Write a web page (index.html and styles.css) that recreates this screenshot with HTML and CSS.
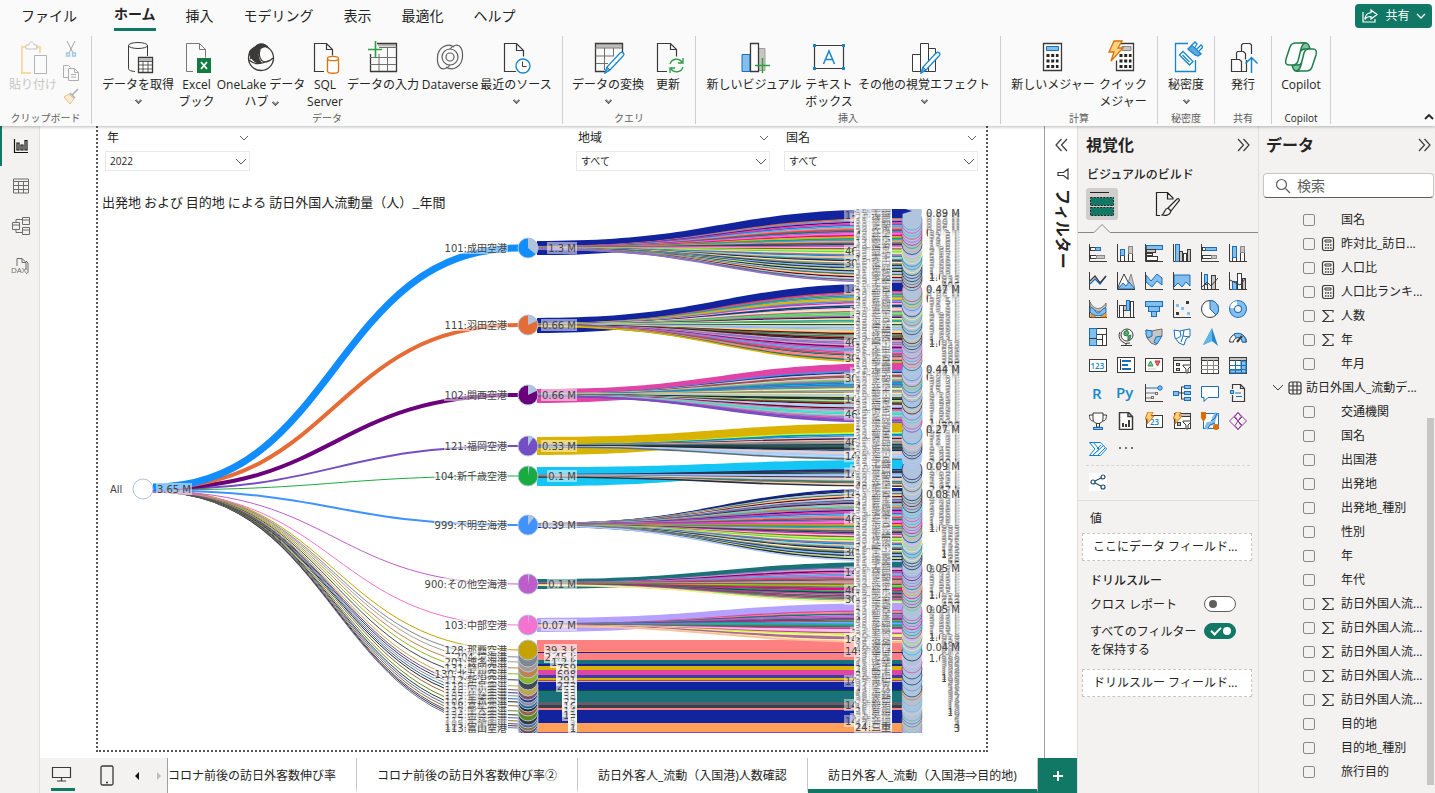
FILE: index.html
```html
<!DOCTYPE html>
<html lang="ja">
<head>
<meta charset="utf-8">
<title>訪日外客人_流動</title>
<link rel="stylesheet" href="styles.css">
</head>
<body>
<div class="app">
<header class="top">
  <div class="menu-row">
    <nav class="menu">
      <button class="menu-item file">ファイル</button>
      <button class="menu-item active">ホーム</button>
      <button class="menu-item">挿入</button>
      <button class="menu-item">モデリング</button>
      <button class="menu-item">表示</button>
      <button class="menu-item">最適化</button>
      <button class="menu-item">ヘルプ</button>
    </nav>
    <button class="share">
      <svg width="18" height="16" viewBox="0 0 18 16" fill="none" stroke="#fff" stroke-width="1.2"><path d="M2 4v10h12v-3M10 2l6 4.500-6 4.500V8.500C7 8.500 5 9.500 4 11.500 4 7.500 6.500 4.800 10 4.600z"/></svg>
      <span>共有</span>
      <svg width="10" height="8" viewBox="0 0 10 8" fill="none" stroke="#fff" stroke-width="1.300"><path d="M1 2l4 4 4-4"/></svg>
    </button>
  </div>
  <div class="ribbon">
    <section class="group g-clip">
      <div class="items">
        <button class="tool w48 off">
          <svg width="34" height="34" viewBox="0 0 34 34" fill="none"><path d="M10 7H6v26h9M20 7h4v6" stroke="#fbd9a6" stroke-width="2"/><path d="M10 9V5h3c0-4 5-4 5 0h3v4z" stroke="#c8c6c4"/><path d="M18.500 15.500h12v18h-12z" stroke="#b5b3b1" fill="#fafafa"/></svg>
          <span>貼り付け</span>
        </button>
        <div class="mini">
          <button aria-label="切り取り"><svg width="16" height="18" viewBox="0 0 16 18" fill="none"><path d="M4 1l6 12M12 1L6 13" stroke="#a6a4a2"/><path d="M3.500 13h3v3h-3zM9.500 13h3v3h-3z" stroke="#9cc9e8" stroke-width="1.300"/></svg></button>
          <button aria-label="コピー"><svg width="18" height="18" viewBox="0 0 18 18" fill="none" stroke="#b0aeac"><path d="M6 13.500H1.500v-12h5l2 2M6.500 4.500h6l4 4v8h-10zM12.500 4.500v4h4M9 10.500h5M9 13h5"/></svg></button>
          <button aria-label="書式のコピー"><svg width="18" height="18" viewBox="0 0 18 18" fill="none"><path d="M16 1l-6 6M8 5l5 5" stroke="#b0aeac" stroke-width="1.500"/><path d="M7 6L2 9l6 7 4-5z" stroke="#f1bd83" fill="#fdebd2"/></svg></button>
        </div>
      </div>
      <h2>クリップボード</h2>
    </section>
    <section class="group g-data">
      <div class="items">
        <button class="tool w80">
          <svg width="34" height="34" viewBox="0 0 34 34" fill="none" stroke="#3b3a39"><path d="M14 31.500C9 31 7.500 30 7.500 28.500v-23M26.500 5.500V16"/><ellipse cx="17" cy="5.500" rx="9.500" ry="3"/><path d="M17.500 17.500h14v15h-14z" fill="#fff" stroke-width="1.300"/><path d="M18 18h13v3H18z" fill="#bebbb8" stroke="none"/><path d="M17.500 21.500h14M17.500 25h14M17.500 29h14M22 21v11M27 21v11" stroke-width=".8"/></svg>
          <span>データを取得</span><i class="caret"></i>
        </button>
        <button class="tool w37">
          <svg width="34" height="34" viewBox="0 0 34 34" fill="none" stroke="#7a7876"><path d="M13 31.500H6.500v-28h13l6 6v8M19.500 3.500v6h6"/><path d="M17 18h14v15H17z" fill="#107c41" stroke="none"/><path d="M21 22l6 7M27 22l-6 7" stroke="#fff" stroke-width="1.800"/></svg>
          <span>Excel<br>ブック</span>
        </button>
        <button class="tool w92">
          <svg width="34" height="34" viewBox="0 0 34 34" fill="none" stroke="#3b3a39" stroke-width="1.300"><circle cx="17" cy="18" r="12.500"/><path d="M11 7c2-5 11-5 14 1-5-2-9 0-10 5-1 4 1 7 3 10-4 1-8 0-12-6-3-5 0-8 5-10z" fill="#3b3a39" stroke="none"/><path d="M16 10c-2 6 1 11 4 12 3 0 6-1 9-4M5 20c6 5 11 4 17 2M10 9c-3 4-2 8-4 10"/></svg>
          <span>OneLake データ<br>ハブ <i class="caret inline"></i></span>
        </button>
        <button class="tool w36">
          <svg width="34" height="34" viewBox="0 0 34 34" fill="none" stroke="#3b3a39"><path d="M16 31.500H6.500v-28h12l6 6v6M18.500 3.500v6h6" stroke-width="1.200"/><path d="M19.500 19v12c0 3 11 3 11 0V19" stroke="#d9730d" fill="#fff" stroke-width="1.300"/><ellipse cx="25" cy="18.500" rx="5.500" ry="2.200" fill="#fff" stroke="#d9730d" stroke-width="1.300"/></svg>
          <span>SQL<br>Server</span>
        </button>
        <button class="tool w80">
          <svg width="34" height="34" viewBox="0 0 34 34" fill="none"><path d="M12 3.500h19v3H12z" fill="#bebbb8"/><path d="M11 3.500h19.500v28h-26V14" stroke="#3b3a39" stroke-width="1.300"/><path d="M13 7.500h17.500M4 17.500h26M4 24.500h26M13 14v17M21.500 8v23" stroke="#72706e"/><path d="M2 9.500h14M9.500 1v17" stroke="#2ea043" stroke-width="1.600"/></svg>
          <span>データの入力</span>
        </button>
        <button class="tool w54">
          <svg width="34" height="34" viewBox="0 0 34 34" fill="none" stroke="#605e5c" stroke-width="1.200"><path d="M21 7C14 2 5 8 4.500 17 4 25 7 30 12 28.500c3-.8 4-2 5-3.500"/><path d="M13 27c7 5 16-1 16.500-10C30 9 27 4 22 5.500c-3 .8-4 2-5 3.500"/><circle cx="17" cy="17" r="8"/><circle cx="17" cy="17" r="4"/></svg>
          <span>Dataverse</span>
        </button>
        <button class="tool w78">
          <svg width="34" height="34" viewBox="0 0 34 34" fill="none" stroke="#3b3a39"><path d="M17 31.500H5.500v-28h12l7 7v6M17.500 3.500v7h7" stroke-width="1.200"/><circle cx="24" cy="26" r="7" stroke="#1887c9" fill="#fff" stroke-width="1.400"/><path d="M23.500 21.500v5h4"/></svg>
          <span>最近のソース</span><i class="caret"></i>
        </button>
      </div>
      <h2>データ</h2>
    </section>
    <section class="group g-query">
      <div class="items">
        <button class="tool w80">
          <svg width="34" height="34" viewBox="0 0 34 34" fill="none"><path d="M4.500 3.500h27v4h-27z" fill="#bebbb8"/><path d="M31.500 12V3.500h-27v28h10" stroke="#3b3a39" stroke-width="1.300"/><path d="M4 8h27M5 16h18M5 23.500h12M13.500 8v22M22.500 8v8" stroke="#72706e"/><path d="M14 33l2-6 13-14c3-2 5 1 3 3L19 30z" fill="#fff" stroke="#1887c9" stroke-width="1.300"/><path d="M14 33l2-6 3 3z" fill="#5aa9e0" stroke="#1887c9"/></svg>
          <span>データの変換</span><i class="caret"></i>
        </button>
        <button class="tool w36">
          <svg width="34" height="34" viewBox="0 0 34 34" fill="none" stroke="#3b3a39"><path d="M16 31.500H6.500v-28h13l6 6v7M19.500 3.500v6h6" stroke-width="1.200"/><path d="M19 24c2-6 9-6 12-2M32 18v5h-5M32 27c-2 6-9 6-12 2M19 33v-5h5" stroke="#2e9b47" stroke-width="1.300"/></svg>
          <span>更新</span>
        </button>
      </div>
      <h2>クエリ</h2>
    </section>
    <section class="group g-insert">
      <div class="items">
        <button class="tool w100">
          <svg width="34" height="34" viewBox="0 0 34 34" fill="none"><path d="M5 14.500h8v17H5z" fill="#83beec" stroke="#1a6fb8"/><path d="M21 8.500h7v22h-7z" fill="#c8c6c4" stroke="#a19f9d"/><path d="M13.500 3.500h8v28h-8z" fill="#fff" stroke="#3b3a39" stroke-width="1.300"/><path d="M18 25.500h15M25.500 18v15" stroke="#2ea043" stroke-width="1.500"/></svg>
          <span>新しいビジュアル</span>
        </button>
        <button class="tool w50">
          <svg width="34" height="34" viewBox="0 0 34 34" fill="none"><path d="M2.500 5.500h29v23h-29z" stroke="#3b3a39" stroke-width="1.200"/><path d="M1 4h3v3H1zM30 4h3v3h-3zM1 27h3v3H1zM30 27h3v3h-3z" fill="#1887c9"/><path d="M11.500 24L17 11l5.500 13M13.500 19.500h7" stroke="#1887c9" stroke-width="1.500"/></svg>
          <span>テキスト<br>ボックス</span>
        </button>
        <button class="tool w140">
          <svg width="34" height="34" viewBox="0 0 34 34" fill="none" stroke="#3b3a39"><path d="M5.500 14.500h8v17h-8zM13.500 3.500h8v28h-8zM21.500 8.500h7v23h-7z" fill="#fff"/><path d="M14 33l2-6 13-14c3-2 5 1 3 3L19 30z" fill="#fff" stroke="#1887c9" stroke-width="1.300"/><path d="M14 33l2-6 3 3z" fill="#5aa9e0" stroke="#1887c9"/></svg>
          <span>その他の視覚エフェクト</span><i class="caret"></i>
        </button>
      </div>
      <h2>挿入</h2>
    </section>
    <section class="group g-calc">
      <div class="items">
        <button class="tool w90">
          <svg width="34" height="34" viewBox="0 0 34 34" fill="none"><path d="M7.500 3.500h18v27h-18z" fill="#fff" stroke="#3b3a39" stroke-width="1.300"/><path d="M10.500 6.500h12v4h-12z" fill="#83beec" stroke="#1a6fb8"/><path d="M10.500 15.500h12M10.500 21h12M10.500 26.500h12" stroke="#252423" stroke-width="3" stroke-dasharray="3 1.700"/></svg>
          <span>新しいメジャー</span>
        </button>
        <button class="tool w50">
          <svg width="34" height="34" viewBox="0 0 34 34" fill="none"><path d="M11.500 3.500h16v27h-17v-10" fill="#fff" stroke="#3b3a39" stroke-width="1.300"/><path d="M16 6.500h9v4h-9z" fill="#c8c6c4" stroke="#8a8886"/><path d="M13.500 15.500h12M13.500 21h12M13.500 26.500h12" stroke="#252423" stroke-width="3" stroke-dasharray="3 1.700"/><path d="M8 1h8l-4 7h5L5 21l3-9H3z" fill="#fcd280" stroke="#d9730d" stroke-width="1.300"/></svg>
          <span>クイック<br>メジャー</span>
        </button>
      </div>
      <h2>計算</h2>
    </section>
    <section class="group g-one">
      <div class="items">
        <button class="tool w50">
          <svg width="34" height="34" viewBox="0 0 34 34" fill="none" stroke="#1887c9" stroke-width="1.300"><path d="M19 3.500H6.500v28h20V20"/><path d="M10.500 15l3.500-3.500L24 21.500 20.500 25zM13.500 15l7 7"/><path d="M19 9l4-4 9 9-3 2-3-1-6-5z" fill="#5aa9e0"/><path d="M23 5l3-3 2 2-2 3M28 9l4-4 2 2-4 4" fill="#fff"/></svg>
          <span>秘密度</span><i class="caret"></i>
        </button>
      </div>
      <h2>秘密度</h2>
    </section>
    <section class="group g-one">
      <div class="items">
        <button class="tool w50">
          <svg width="34" height="34" viewBox="0 0 34 34" fill="none" stroke="#3b3a39" stroke-width="1.200"><path d="M5.500 19.500h8l2 2v10h-10zM10.500 19v-6l1-1.500h6l2 2v6M15.500 11V5l1.500-1.500h7l1.500 1.500v9M15.500 31.500h5V20"/><path d="M25.500 33V18M19.500 23.500l6-6 6 6" stroke="#1887c9" stroke-width="1.500"/></svg>
          <span>発行</span>
        </button>
      </div>
      <h2>共有</h2>
    </section>
    <section class="group g-one">
      <div class="items">
        <button class="tool w50">
          <svg width="34" height="34" viewBox="0 0 34 34" fill="none" stroke="#1e7f4c" stroke-width="1.500"><path d="M17 3h5c2 0 3 2 4 6h-5c-3 0-4 1-5 3z" fill="#86c2a2"/><path d="M8 25h6c2 0 3-1 4-3l-3 9h-3c-2 0-3-2-4-6z" fill="#86c2a2"/><path d="M12 3h10c-3 0-4 2-5 6l-3 12c-1 3-2 4-5 4H5c-3 0-4-2-3-6l4-12c1-3 3-4 6-4z" fill="#fff"/><path d="M22 31H12c3 0 4-2 5-6l3-12c1-3 2-4 5-4h4c3 0 4 2 3 6l-4 12c-1 3-3 4-6 4z" fill="#fff"/></svg>
          <span>Copilot</span>
        </button>
      </div>
      <h2 class="dark">Copilot</h2>
    </section>
    <button class="collapse" aria-label="リボンを折りたたむ"><svg width="10" height="8" viewBox="0 0 10 8" fill="none" stroke="#252423" stroke-width="1.800"><path d="M1 6l4-4 4 4"/></svg></button>
  </div>
</header>

<div class="work">
  <nav class="rail">
    <button class="rail-btn on" aria-label="レポート"><svg width="16" height="16" viewBox="0 0 16 16" fill="none" stroke="#111" stroke-width="1.200"><path d="M1.500 1v13.500H15M4 5h2v7H4zM8 7h2v5H8zM12 2.500h2V12h-2z"/></svg></button>
    <button class="rail-btn" aria-label="テーブル"><svg width="18" height="16" viewBox="0 0 18 16" fill="none" stroke="#6e6c6a"><path d="M1.500 1h15v14h-15zM1.500 3.500h15M1.500 7.500h15M1.500 11.500h15M6.500 4v11M11.500 4v11"/></svg></button>
    <button class="rail-btn" aria-label="モデル"><svg width="20" height="20" viewBox="0 0 20 20" fill="none" stroke="#6e6c6a"><path d="M11.500 1.500h7v7h-7zM11.500 4h7M11.500 11.500h7v7h-7zM11.500 14h7M1.500 6.500h7v7h-7zM1.500 9h7M5 6V3.500h6M5 14v2.500h6"/></svg></button>
    <button class="rail-btn" aria-label="DAX"><svg width="20" height="18" viewBox="0 0 20 18" fill="none" stroke="#6e6c6a"><path d="M6 9V1.500h5l4 4V13M11 1.500v4h4M15 4l2 2v9c0 1-1 1.500-2 1.500"/><text x="0" y="16" font-size="8" font-family="Open Sans" fill="#6e6c6a" stroke="none">DAX</text></svg></button>
  </nav>

  <div class="center">
    <div class="upper">
      <main class="stage">
        <div class="page">
          <div class="slicers">
            <label class="slicer s-year"><span class="cap">年 <svg width="10" height="6" viewBox="0 0 10 6"><path d="M1 1l4 4 4-4"/></svg></span>
              <span class="box"><select><option>2022</option></select><svg width="12" height="7" viewBox="0 0 12 7"><path d="M1 1l5 5 5-5"/></svg></span></label>
            <label class="slicer"><span class="cap">地域 <svg width="10" height="6" viewBox="0 0 10 6"><path d="M1 1l4 4 4-4"/></svg></span>
              <span class="box"><select><option>すべて</option></select><svg width="12" height="7" viewBox="0 0 12 7"><path d="M1 1l5 5 5-5"/></svg></span></label>
            <label class="slicer"><span class="cap">国名 <svg width="10" height="6" viewBox="0 0 10 6"><path d="M1 1l4 4 4-4"/></svg></span>
              <span class="box"><select><option>すべて</option></select><svg width="12" height="7" viewBox="0 0 12 7"><path d="M1 1l5 5 5-5"/></svg></span></label>
          </div>
          <h1>出発地 および 目的地 による 訪日外国人流動量（人）_年間</h1>
          <svg id="flow" class="flow" viewBox="98 209 888 524" role="img" aria-label="訪日外国人流動量"></svg>
        </div>
      </main>
      <aside class="filters">
        <button aria-label="展開"><svg width="13" height="14" viewBox="0 0 13 14" fill="none" stroke="#3b3a39" stroke-width="1.200"><path d="M6.500 1l-5.500 6 5.500 6M12 1L6.500 7l5.500 6"/></svg></button>
        <svg class="funnel" width="12" height="12" viewBox="0 0 12 12" fill="none" stroke="#3b3a39" stroke-width="1.200"><path d="M11 1v10L6.500 7.500H1v-3h5.500z"/></svg>
        <span class="vtext">フィルター</span>
      </aside>
    </div>
    <footer class="tabs">
      <div class="views">
        <button class="v-desk" aria-label="デスクトップ"><svg width="22" height="16" viewBox="0 0 22 16" fill="none" stroke="#3b3a39" stroke-width="1.200"><path d="M1.500 1.500h18v10h-18zM10.500 12v3M6 15h9"/></svg></button>
        <button aria-label="モバイル"><svg width="14" height="22" viewBox="0 0 14 22" fill="none" stroke="#3b3a39" stroke-width="1.300"><rect x="1" y="1" width="12" height="19" rx="1.500"/><path d="M6 17.500h2"/></svg></button>
        <button aria-label="前へ"><svg width="6" height="10" viewBox="0 0 6 10"><path d="M5 1v8L1 5z" fill="#111"/></svg></button>
        <button aria-label="次へ"><svg width="6" height="10" viewBox="0 0 6 10"><path d="M1 1v8l4-4z" fill="#bbb"/></svg></button>
      </div>
      <button class="tab cut">コロナ前後の訪日外客数伸び率</button>
      <button class="tab">コロナ前後の訪日外客数伸び率②</button>
      <button class="tab">訪日外客人_流動（入国港)人数確認</button>
      <button class="tab sel">訪日外客人_流動（入国港⇒目的地)</button>
      <button class="add" aria-label="新しいページ"><svg width="12" height="12" viewBox="0 0 12 12" stroke="#fff" stroke-width="2"><path d="M6 1v10M1 6h10"/></svg></button>
    </footer>
  </div>

  <aside class="viz">
    <div class="pane-head"><h2>視覚化</h2><button aria-label="閉じる"><svg width="13" height="14" viewBox="0 0 13 14" fill="none" stroke="#3b3a39" stroke-width="1.200"><path d="M1 1l5.500 6L1 13M6.500 1L12 7l-5.500 6"/></svg></button></div>
    <h3>ビジュアルのビルド</h3>
    <div class="modes">
      <button class="mode on" aria-label="ビルド"><svg width="32" height="32" viewBox="0 0 32 32"><path d="M4 4.500h19" stroke="#252423"/><path d="M4.500 9.500h23v8h-23zM4.500 19.500h23v8h-23z" fill="#117865" stroke="#252423" stroke-dasharray="2 1.200"/></svg></button>
      <button class="mode" aria-label="書式"><svg width="32" height="32" viewBox="0 0 32 32" fill="none" stroke="#252423" stroke-width="1.200"><path d="M9 27.500H5.500v-23h11l6 6M16.500 5v6h6M17 20l9-9c2-1 3 1 2 2l-8 10M17 20l3 3c-1 4-5 5-9 4 3-2 2-6 6-7z"/></svg></button>
    </div>
    <svg class="pointer" height="12" viewBox="0 0 181 12" preserveAspectRatio="xMinYMin slice" fill="none" stroke="#8a8886"><path d="M0 10.500h16l8-8 8 8h1000"/></svg>
    <div class="icons" id="icons"></div>
    <div class="custom"><button aria-label="フロー"><svg width="18" height="18" viewBox="0 0 18 18" fill="#fff" stroke="#1f4e66" stroke-width="1.200"><path d="M4 9l10-5M4 9l10 5"/><circle cx="4" cy="9" r="2"/><circle cx="14" cy="4" r="2"/><circle cx="14" cy="14" r="2"/></svg></button></div>
    <div class="wells">
      <h4 class="plain">値</h4>
      <button class="well">ここにデータ フィールド...</button>
      <h4>ドリルスルー</h4>
      <label class="sw"><span>クロス レポート</span><input type="checkbox" role="switch"></label>
      <label class="sw two"><span>すべてのフィルターを保持する</span><input type="checkbox" role="switch" checked></label>
      <button class="well">ドリルスルー フィールド...</button>
    </div>
  </aside>

  <aside class="data">
    <div class="pane-head"><h2>データ</h2><button aria-label="閉じる"><svg width="13" height="14" viewBox="0 0 13 14" fill="none" stroke="#3b3a39" stroke-width="1.200"><path d="M1 1l5.500 6L1 13M6.500 1L12 7l-5.500 6"/></svg></button></div>
    <label class="search"><svg width="16" height="16" viewBox="0 0 16 16" fill="none" stroke="#605e5c" stroke-width="1.200"><circle cx="6.500" cy="6.500" r="5"/><path d="M10.500 10.500L15 15"/></svg><input type="search" placeholder="検索" aria-label="検索"></label>
    <div class="list"><div class="fields" id="fields"></div><div class="scroll"><div class="thumb"></div></div></div>
  </aside>
</div>
</div>
<script src="main.js"></script>
</body>
</html>
```
FILE: styles.css
```css
* { box-sizing: border-box; }
body { margin: 0; font-family: "Open Sans", "Noto Sans CJK JP", sans-serif; font-size: 12px; line-height: 18px; color: #252423; background: #fff; }
button { font: inherit; color: inherit; background: none; border: 0; padding: 0; margin: 0; }
h1, h2, h3, h4 { margin: 0; font-weight: 400; font-size: 12px; }
svg { display: block; flex: none; }
.app { height: 100vh; display: flex; flex-direction: column; overflow: hidden; }

.top { background: #fafafa; height: 126px; flex: none; box-shadow: 0 1px 3px #0004; position: relative; z-index: 2; }
.menu-row { height: 36px; display: flex; justify-content: space-between; align-items: flex-start; }
.menu { display: flex; gap: 30px; padding-left: 21px; }
.menu-item { font-size: 14px; line-height: 22px; padding-bottom: 3px; margin-top: 3px; height: 28px; white-space: nowrap; }
.menu-item.file { margin-right: 7px; }
.menu-item.active { font-weight: 700; border-bottom: 3px solid #117865; }
.share { margin: 4px 3px 0 0; width: 77px; height: 24px; border-radius: 4px; background: #117865; color: #fff; display: flex; align-items: center; justify-content: center; gap: 6px; }

.ribbon { display: flex; height: 90px; }
.group { border-right: 1px solid #d0cecc; height: 88px; display: flex; flex-direction: column; }
.group h2 { font-size: 10px; line-height: 12px; text-align: center; color: #605e5c; }
.group h2.dark { color: #252423; }
.items { display: flex; height: 77px; padding-top: 4px; }
.g-clip { width: 92px; }
.g-clip .items { padding-left: 9px; }
.g-data { width: 471px; }
.g-data .items { padding-left: 6px; }
.g-query { width: 133px; }
.g-query .items { padding-left: 5px; }
.g-query .items { gap: 2px; }
.g-insert { width: 305px; }
.g-insert .items { padding-left: 8px; }
.g-calc { width: 157px; }
.g-calc .items { padding-left: 7px; }
.g-one { width: 57px; }
.g-one .items { justify-content: center; }
.g-one:last-of-type { width: 59px; }
.tool { display: flex; flex-direction: column; align-items: center; gap: 2px; line-height: 17px; white-space: nowrap; }
.tool span { text-align: center; }
.tool.off { color: #c8c6c4; }
.w36 { width: 36px; } .w37 { width: 37px; } .w48 { width: 48px; } .w50 { width: 50px; }
.w54 { width: 54px; } .w78 { width: 78px; } .w80 { width: 80px; } .w90 { width: 90px; }
.w92 { width: 92px; } .w100 { width: 100px; } .w140 { width: 140px; }
.caret { width: 5px; height: 5px; border: solid #484644; border-width: 0 1px 1px 0; box-shadow: inset -1px -1px 0 #8a8886; rotate: 45deg; margin-top: 3px; }
.caret.inline { display: inline-block; margin: 0 0 1px 1px; }
.mini { display: flex; flex-direction: column; gap: 6px; align-items: center; width: 28px; }
.collapse { margin-left: auto; align-self: flex-end; padding: 0 1px 5px 0; }

.work { flex: 1; display: flex; min-height: 0; }
.rail { width: 40px; flex: none; background: #f3f2f1; border-right: 1px solid #e1dfdd; display: flex; flex-direction: column; }
.rail-btn { height: 40px; display: flex; align-items: center; justify-content: center; border-left: 2px solid transparent; }
.rail-btn.on { border-left-color: #117865; }
.center { flex: 1; min-width: 0; display: flex; flex-direction: column; }
.upper { flex: 1; min-height: 0; display: flex; }
.stage { flex: 1; min-width: 0; padding: 0 56px 6px; display: flex; }
.page { flex: 1; min-width: 0; border: 2px dotted #555; border-top: 0; overflow: hidden; }
.slicers { display: flex; gap: 14px; padding: 3px 8px 0 7px; }
.slicer { width: 194px; display: block; }
.s-year { width: 145px; margin-right: auto; }
.cap { display: flex; justify-content: space-between; align-items: center; padding: 0 1px 0 2px; }
.slicer svg { fill: none; stroke: #605e5c; }
.box { display: flex; align-items: center; height: 20px; margin-top: 4px; border: 1px solid #eae8e6; padding-right: 2px; }
.box select { flex: 1; appearance: none; border: 0; background: none; font: inherit; font-size: 10px; line-height: 14px; padding: 0 0 0 4px; color: #252423; }
h1 { font-family: "Noto Sans CJK JP", sans-serif; font-size: 13px; line-height: 20px; margin: 21px 0 0 4px; white-space: nowrap; }
.flow { width: 100%; height: auto; margin-top: -3px; font-family: "DejaVu Sans", "Noto Sans CJK JP", sans-serif; font-size: 10px; fill: #444; }
.flow .link { fill: none; }

.filters { width: 33px; flex: none; border-left: 1px solid #a19f9d; display: flex; flex-direction: column; align-items: center; padding-top: 12px; }
.funnel { margin: 16px 0 9px 4px; }
.vtext { writing-mode: vertical-rl; text-orientation: sideways; font-size: 16px; font-weight: 700; line-height: 20px; margin-left: 4px; }

.tabs { height: 35px; flex: none; background: #f3f2f1; display: flex; }
.views { width: 128px; flex: none; display: flex; align-items: center; gap: 20px; padding-left: 11px; border-right: 1px solid #a19f9d; }
.views button { height: 30px; display: flex; align-items: center; }
.v-desk { border-bottom: 3px solid #117865; width: 24px; margin-right: 5px; }
.views button + button + button { margin-right: -4px; }
.tab { background: #fff; padding: 0 20px; border-right: 1px solid #c8c6c4; white-space: nowrap; overflow: hidden; border-bottom: 4px solid #fff; padding-top: 4px; }
.tab.cut { padding-left: 0; }
.tab.sel { border-bottom-color: #117865; flex: 1; }
.add { width: 39px; flex: none; background: #117865; display: flex; align-items: center; justify-content: center; }

.viz { width: 182px; flex: none; background: #f3f2f1; border-left: 1px solid #e1dfdd; border-right: 1px solid #e1dfdd; }
.pane-head { display: flex; justify-content: space-between; align-items: center; padding: 7px 8px 0 8px; }
.pane-head h2 { font-size: 16px; font-weight: 700; line-height: 24px; }
.viz h3 { font-family: "Noto Sans CJK JP", sans-serif; font-weight: 500; padding: 8px 9px 0; }
.modes { display: flex; gap: 33px; padding: 5px 8px 0; }
.mode { border-radius: 3px; }
.mode.on { background: #d0cecc; }
.pointer { width: 100%; margin-top: 2px; }
.icons { display: grid; grid-template-columns: repeat(6, 18px); gap: 10px; padding: 10px 0 7px 11px; }
.icons button { height: 18px; }
.custom { margin: 0 8px; padding: 7px 3px 9px; border-top: 1px dashed #d8d6d4; display: flex; }
.custom button { background: #fff; }
.wells { border-top: 1px solid #e1dfdd; padding: 8px 6px 0 4px; display: flex; flex-direction: column; }
.wells h4 { font-weight: 500; font-family: "Noto Sans CJK JP", sans-serif; padding: 10px 8px 7px; }
.wells h4.plain { font-weight: 400; padding: 0 8px 6px; }
.well { height: 28px; background: #fff; border: 1px dashed #c8c6c4; text-align: left; padding: 0 10px; white-space: nowrap; overflow: hidden; flex: none; }
.sw { display: flex; justify-content: space-between; gap: 6px; padding: 0 16px 0 8px; line-height: 18px; }
.sw.two { margin: 9px 0 10px; }
.sw input { appearance: none; flex: none; width: 32px; height: 16px; border: 1px solid #605e5c; border-radius: 8px; margin: 0; background: #fff; display: flex; align-items: center; padding: 0 4px; }
.sw input::before { content: ""; width: 8px; height: 8px; border-radius: 50%; background: #605e5c; }
.sw input:checked { background: #117865; border-color: #117865; justify-content: space-between; flex-direction: row-reverse; }
.sw input:checked::before { background: #fff; }
.sw input:checked::after { content: ""; width: 8px; height: 4px; border: solid #fff; border-width: 0 0 2px 2px; rotate: -45deg; margin: -3px 0 0 2px; }

.data { width: 176px; flex: none; background: #f3f2f1; display: flex; flex-direction: column; }
.data .pane-head { padding: 7px 4px 0 7px; }
.search { flex: none; margin: 16px 1px 0 4px; height: 25px; display: flex; align-items: center; gap: 6px; padding-left: 11px; background: #fff; border: 1px solid #c8c6c4; border-bottom-color: #605e5c; border-radius: 4px; }
.search input { border: 0; outline: 0; background: none; font: inherit; font-size: 14px; min-width: 0; flex: 1; padding: 0; }
.search input::placeholder { color: #605e5c; }
.list { flex: 1; min-height: 0; display: flex; padding-top: 10px; }
.fields { flex: 1; min-width: 0; overflow: hidden; }
.field { display: grid; grid-template-columns: 12px 14px 1fr; column-gap: 6px; align-items: center; height: 24px; padding-left: 44px; white-space: nowrap; }
.field.table { column-gap: 4px; padding-left: 13px; }
.field input { appearance: none; width: 12px; height: 12px; margin: 0; border: 1px solid #8a8886; border-radius: 2px; }
.field span { grid-column: 3; }
.scroll { width: 8px; display: flex; flex-direction: column; padding-bottom: 8px; }
.thumb { width: 7px; flex: 1; margin-top: 210px; background: #c8c6c4; }
```
FILE: main.js
```js
// ---- visual gallery -------------------------------------------------------
const K = '#3b3a39', B = '#1a6fb8', F = '#83beec', G = '#c8c6c4';
const axis = `<path d="M.5 0v17.500H18" stroke="${K}"/>`;
const r = (x, y, w, h, f = '#fff', s = K) => `<rect x="${x + .5}" y="${y + .5}" width="${w}" height="${h}" fill="${f}" stroke="${s}"/>`;
const p = (d, s = K, f = 'none', w = 1) => `<path d="${d}" stroke="${s}" fill="${f}" stroke-width="${w}"/>`;
const bolt = p('M3 0h5L6 4h3L2 12l1-5H0z', '#d9730d', '#fcd280');
const funnel = p('M10 9h8v1l-3 3v4h-2v-4l-3-3z', K, '#fff');
const num = (x, y, s, f = '#1887c9') => `<text x="${x}" y="${y}" font-size="${s}" font-weight="600" font-family="Open Sans" fill="${f}">`;
const gallery = {
  '積み上げ横棒': axis + r(1, 3, 5, 3) + r(6, 3, 5, 3, F, B) + r(1, 11, 6, 3) + r(7, 11, 8, 3, G, '#8a8886'),
  '積み上げ縦棒': axis + r(3, 11, 4, 6) + r(3, 5, 4, 6, F, B) + r(11, 9, 4, 8) + r(11, 2, 4, 7, G, '#8a8886'),
  '集合横棒': axis + r(1, 1, 16, 4, F, B) + r(1, 5, 9, 3, G) + r(1, 9, 6, 2) + r(1, 12, 11, 4),
  '集合縦棒': axis + r(2, 0, 4, 17, F, B) + r(6, 7, 3, 10, G) + r(10, 9, 3, 8) + r(14, 5, 3, 12, G),
  '100% 横棒': axis + r(1, 3, 3, 3) + r(4, 3, 11, 3, F, B) + r(1, 11, 9, 3) + r(10, 11, 5, 3, G, '#8a8886'),
  '100% 縦棒': axis + r(3, 13, 4, 4) + r(3, 2, 4, 11, F, B) + r(11, 8, 4, 9) + r(11, 2, 4, 6, G, '#8a8886'),
  '折れ線': axis + p('M1 12l5-5 5 5 6-8', B, 'none', 1.3) + p('M1 9l5-5 5 7 6-7', K, 'none', 1.3),
  '面': p('M9 17l5-15 4 15z', '#8a8886', G) + p('M1 15L7 2l7 14z', K, '#fff') + p('M1 17l5-6 3 3 3-4 6 7z', B, F) + axis,
  '積み上げ面': p('M1 3l5 6 6-7 5 4v7l-5-4-5 6-6-5z', B, F) + axis,
  '100% 面': p('M1 3h16v11l-4-4-4 5-4-4-4 4z', B, F) + axis,
  '折れ線と積み上げ': axis + r(3, 2, 3, 10, F, B) + r(3, 12, 3, 5) + r(10, 3, 4, 14, G) + p('M1 15l5-5 4 4 7-8'),
  '折れ線と集合': axis + r(3, 9, 4, 8, F, B) + r(8, 1, 4, 16) + r(13, 6, 3, 11, G) + p('M1 8l6 3 4 2 6-7'),
  'リボン': axis + p('M2 12h4v5H2zM12 12h5v5h-5z', '#d9730d', '#f5a54a') + p('M1 2c4 8 11 9 16 1v4c-5 7-11 5-16-1z', '#72706e', G) + p('M1 8c4-2 5 5 8 5s5-6 8-5v4c-4 5-12 5-16 0z', B, F),
  'ウォーターフォール': axis + r(2, 5, 4, 12) + r(6, 5, 3, 5, G) + r(9, 0, 3, 10, F, B) + r(13, 1, 3, 16),
  'じょうご': r(0, 1, 17, 5, F, B) + r(3, 6, 11, 5, F, B) + r(6, 11, 5, 5, F, B),
  '散布図': axis + `<path fill="${K}" d="M13 1h3v3h-3zM3 12h3v3H3z"/><path fill="${F}" d="M3 4h3v3H3zM8 7h3v3H8zM14 12h3v3h-3z"/>`,
  '円': `<circle cx="9" cy="9" r="8.500" fill="#fff" stroke="${K}"/>` + p('M9 .5a8.500 8.500 0 0 1 6 14.500L9 9z', B, F),
  'ドーナツ': `<circle cx="9" cy="9" r="6" fill="none" stroke="${B}" stroke-width="6"/><circle cx="9" cy="9" r="6" fill="none" stroke="${F}" stroke-width="4"/>` + p('M8 3A6 6 0 0 0 3 8', '#fff', 'none', 4),
  'ツリーマップ': r(0, 0, 17, 17) + r(0, 0, 7, 17, F, B) + p('M8 6.500h10M8 11.500h5M13.500 6v12M0 10.500h8'),
  'マップ': `<circle cx="10" cy="7" r="6" fill="#fff" stroke="${K}"/>` + p('M7 4l3-2 2 3-2 3-3-1zM11 8l3-1-1 4-2 1z', '#2e7d46', '#4caf70') + p('M3 4a8 8 0 0 0 10 11M9 15v2M4 17.500h11'),
  '塗り分け地図': p('M1 2l6 1 4-1 6-1v7l-4 3-2 6-5-2-4-5z', '#72706e', G) + p('M1 2l6 1v5l-4 2-2-3zM11 9l6-1-5 8-3-2z', B, F),
  '図形マップ': p('M1 2l6 1 4-1 6-1v7l-4 3-2 6-5-2-4-5z', B, '#fff') + p('M7 3l1 5-5 3M11 2l-1 6 7 1M10 8l-2 6', B),
  'Azure マップ': p('M11 0l6 18-6-5-9 4z', 'none', '#2b88c8') + p('M11 0v13l-9 4z', 'none', '#5cb8ea'),
  'ゲージ': p('M.5 14a8.500 8.500 0 0 1 17 0h-4a4.500 4.500 0 0 0-9 0z', K, '#fff') + p('M5 6a8.500 8.500 0 0 1 12 8h-4a4 4 0 0 0-6-4z', B, F) + p('M8 14l5-6', K, 'none', 2),
  'カード': r(0, 3, 17, 12) + num(1.5, 12.5, 8) + '123</text>',
  '複数の行カード': r(0, 1, 17, 15) + p('M3.500 3v11') + p('M5 5h9M5 9h6M5 13h9', B, 'none', 2),
  'KPI': r(0, 2, 17, 13) + p('M3 10l2.500-5L8 10z', '#2e9b47', '#7fc98f') + p('M10 5h5l-2.500 5z', '#c43131', '#f07070') + p('M3 13h8', G),
  'スライサー': r(0, 1, 17, 15) + r(0, 1, 17, 3, G) + r(3, 7, 3, 2, G) + r(3, 12, 3, 2, G) + funnel,
  'テーブル': r(0, 1, 17, 16) + r(0, 1, 17, 3, G) + p('M0 9.500h18M0 13.500h18M6.500 4v13M12.500 4v13', '#8a8886'),
  'マトリックス': r(0, 1, 17, 16) + r(0, 1, 17, 3, G) + p('M12 5h5v12H1v-3h11z', B, F) + p('M0 9.500h18M0 13.500h18M6.500 4v13M12.500 4v13', B),
  'R': num(3, 15, 15) + 'R</text>',
  'Python': num(-1, 14, 15) + 'Py</text>',
  '主要なインフルエンサー': axis + p('M1 4h12', B) + p('M1 9h9M1 14h5', '#72706e') + `<circle cx="15" cy="4" r="2.200" fill="${F}" stroke="${B}"/>` + r(10, 8, 2, 2, '#fff', '#72706e') + r(6, 12, 2, 2, '#fff', '#72706e'),
  '分解ツリー': p('M5 9h6M8.500 3v12M8 3h3M8 15h3') + r(0, 7, 5, 4, F, B) + r(11, 1, 6, 3, F, B) + r(11, 7, 6, 3, F, B) + r(11, 13, 6, 3, F, B),
  'Q&A': p('M.5 2.500h17v11H7l-4 4v-4H.5z', B, '#fff'),
  'ナラティブ': p('M3.500 5V.5h8l4 4v13h-12V11M11.500.5v4h4', K, 'none', 1.2) + r(1, 6, 3, 3, F, B) + p('M6 9h6M7 12.500h6', B),
  '目標': p('M4 1h10v6c0 6-10 6-10 0zM4 3H.5c0 4 1 6 4 6M14 3h3.500c0 4-1 6-4 6M7.500 11v4h3v-4', K, '#fff') + r(4, 15, 9, 2, F, B),
  'ページ分割': p('M2.500.5h9l4 4v13h-13zM11 .5v4h4', K, '#fff', 1.5) + p('M6 15v-4M9 15v-3M12 15V8', K, 'none', 2),
  '新しいカード': r(1, 3, 16, 12) + num(5, 13, 8) + '23</text>' + bolt,
  '新しいスライサー': r(1, 1, 16, 15) + r(1, 1, 16, 3, G) + r(4, 10, 3, 3, G) + funnel + bolt,
  'ArcGIS': r(2, 1, 15, 15, '#fff', B) + p('M5 17l2-5 5-1 1-5 3-5', '#83beec', 'none', 4) + p('M10 9l4-3 2-5M7 16l2-3 5-2', B) + p('M0 0h5v6l-2.500 4L0 6z', 'none', '#e06c00') + '<circle cx="15" cy="15" r="3" fill="#e06c00"/>',
  'Power Apps': p('M9 .5L17.500 9 9 17.500.5 9zM9 .5l-3 4 3 4.500 3-4.500zM9 9l-3 4.500 3 4 3-4zM5 5l4 4M13 13L9 9M13 5L9 9', '#8f3b9b'),
  'Power Automate': p('M.5 2.500h11l6 6.500-6 6.500H.5L6 9z', '#0c7bdc', '#fff') + p('M4 2l6 7-6 6M8 9l4-4M5 14l9-8M9 15l7-7', '#0c7bdc'),
  'その他': '<path fill="#72706e" d="M2 7h2v2H2zM8 7h2v2H8zM14 7h2v2h-2z"/>'
};
document.getElementById('icons').innerHTML = Object.entries(gallery).map(([n, s]) =>
  `<button aria-label="${n}"><svg width="18" height="18" viewBox="0 0 18 18" fill="none">${s}</svg></button>`).join('');

// ---- field list -----------------------------------------------------------
const calcIcon = `<svg width="14" height="14" viewBox="0 0 14 14" fill="none" stroke="${K}"><rect x="1.500" y=".5" width="11" height="13" rx="2" stroke-width="1.200"/><path d="M4 3h6v2H4z"/><path d="M4 8h7M4 11h7" stroke-width="1.500" stroke-dasharray="1.500 1"/></svg>`;
const sumIcon = `<svg width="14" height="14" viewBox="0 0 14 14" fill="none"><path d="M12 3.500V1.500H2L7.500 7 2 12.500h10v-2" stroke="${K}" stroke-width="1.200"/></svg>`;
const fields = [['国名'], ['昨対比_訪日...', 'c'], ['人口比', 'c'], ['人口比ランキ...', 'c'], ['人数', 's'], ['年', 's'], ['年月'],
  ['訪日外国人_流動デ...', 't'], ['交通機関'], ['国名'], ['出国港'], ['出発地'], ['出発地_種別'], ['性別'], ['年'], ['年代'],
  ['訪日外国人流...', 's'], ['訪日外国人流...', 's'], ['訪日外国人流...', 's'], ['訪日外国人流...', 's'], ['訪日外国人流...', 's'],
  ['目的地'], ['目的地_種別'], ['旅行目的']];
document.getElementById('fields').innerHTML = fields.map(([n, k]) => k === 't'
  ? `<div class="field table"><svg width="12" height="8" viewBox="0 0 12 8" fill="none" stroke="${K}"><path d="M1 1l5 5 5-5"/></svg><svg width="14" height="14" viewBox="0 0 14 14" fill="none" stroke="${K}" stroke-width="1.200"><rect x="1" y="1" width="12" height="12" rx="2"/><path d="M1 5h12M1 9h12M5 1v12M9 1v12"/></svg><span>${n}</span></div>`
  : `<label class="field"><input type="checkbox">${k === 'c' ? calcIcon : k === 's' ? sumIcon : ''}<span>${n}</span></label>`).join('');

// ---- flow chart -----------------------------------------------------------
const out = [];
const pale = '#b0c4de';
const mix = ['#E66C37', '#6B9BD8', '#6B007B', '#E044A7', '#744EC2', '#15C6F4', '#FF8080', '#D64550', '#197278', '#BE5DC9', '#F472D0', '#EC008C',
  '#D9B300', '#1AAB40', '#4092FF', '#FFA058', '#605E5C', '#12436D', '#C83D95', '#FFBBED', '#8A5A44', '#BFFF3A', '#5BD667', '#FFEB99',
  '#A66999', '#0091D5', '#FABFA0', '#37A794', '#3A1A5F', '#FFF199', '#8C8C8C', '#154A3A', '#99B8FF', '#2B3A67', '#C5E17A', '#1C2B39',
  '#B5C7FF', '#4A7C59', '#FFCE9E', '#7A0000', '#A0D1FF', '#5F6B6D', '#9071CE', '#262E45', '#D8A7B1', '#35E0CC'];
const prefs = ['13:東京', '12:千葉', '27:大阪', '26:京都', '1:北海道', '40:福岡', '11:埼玉', '23:愛知', '22:静岡', '19:山梨', '20:長野', '28:兵庫',
  '34:広島', '29:奈良', '47:沖縄', '8:茨城', '9:栃木', '21:岐阜', '10:群馬', '17:石川', '4:宮城', '43:熊本', '44:大分', '15:新潟',
  '24:三重', '7:福島', '33:岡山', '42:長崎', '25:滋賀', '16:富山', '2:青森', '3:岩手', '6:山形', '5:秋田', '37:香川', '35:山口',
  '38:愛媛', '18:福井', '31:鳥取', '41:佐賀', '45:宮崎', '36:徳島', '39:高知', '32:島根'];
const wide = { 14: '14:神奈川', 46: '46:鹿児島', 30: '30:和歌山' };
const textWidth = s => [...s].reduce((w, c) => w + (c > '\u2fff' ? 10 : ':. '.includes(c) ? 3 : c === 'M' ? 9 : 6), 0);
const label = (x, y, s, a) => {
  const w = textWidth(s) + 3;
  out.push(`<rect x="${x - w + 1}" y="${y - 6}" width="${w}" height="12" fill="#fff" fill-opacity="${a}"/><text x="${x}" y="${y + 4}" text-anchor="end">${s}</text>`);
};
const wedge = (y, f) => {
  const a = f * 2 * Math.PI;
  return `<path d="M528 ${y}V${y - 10}A10 10 0 0 1 ${528 + 10 * Math.sin(a)} ${y - 10 * Math.cos(a)}z" fill="${pale}"/>`;
};
const big = [
  { n: '101:成田空港', v: '1.3 M', y: 248, c: '#118DFF', w: 7, f: .36, m: '#12239E', s: [241, 255], t: [209, 283], th: 9, k: { 14: 214, 46: 251, 30: 264 }, r: 890 },
  { n: '111:羽田空港', v: '0.66 M', y: 325, c: '#E66C37', w: 4, f: .18, m: '#12239E', s: [318, 333], t: [283, 363], th: 8, k: { 14: 289, 46: 342, 30: 358 }, r: 470 },
  { n: '102:関西空港', v: '0.66 M', y: 395, c: '#6B007B', w: 4, f: .18, m: '#E044A7', s: [389, 403], t: [363, 423], th: 7, k: { 30: 378, 14: 398, 46: 415 }, r: 440 },
  { n: '121:福岡空港', v: '0.33 M', y: 446, c: '#744EC2', w: 2, f: .09, m: '#D9B300', s: [437, 455], t: [423, 460], th: 9, k: { 46: 443, 14: 457 }, r: 270 },
  { n: '104:新千歳空港', v: '0.1 M', y: 476, c: '#1AAB40', w: 1, f: .027, m: '#15C6F4', s: [467, 486], t: [460, 487], th: 9, k: { 14: 474 }, r: 90 },
  { n: '999:不明空海港', v: '0.39 M', y: 525, c: '#4092FF', w: 2, f: .107, m: '#12239E', s: [523, 528], t: [488, 562], th: 2, k: { 14: 494, 46: 518, 30: 552 }, r: 80 },
  { n: '900:その他空海港', v: '0.1 M', y: 584, c: '#BE5DC9', w: 1, f: .027, m: '#197278', s: [579, 589], t: [562, 603], th: 5, k: { 14: 573, 46: 589, 30: 599 }, r: 50 },
  { n: '103:中部空港', v: '0.07 M', y: 625, c: '#F472D0', w: 1, f: .02, m: '#B5A1FF', s: [618, 632], t: [603, 643], th: 7, k: { 14: 639 }, r: 50 }
];
const small = [['128:那覇空港', '39.3 k', 650, '#C4A200'], ['204:境海港', '2.45 k', 657, '#808794'], ['201:博多海港', '1.2 k', 662, '#A99B92'],
  ['131:静岡空港', '759', 668, '#C0834D'], ['130:北九州空港', '698', 674, '#8EB826'], ['112:新潟空港', '291', 680, '#404850'],
  ['119:広島空港', '273', 686, '#BCA84C'], ['140:岡山空港', '53', 690, '#84506A'], ['116:小松空港', '43', 693, '#2A3A86'], ['107:仙台空港', '33', 696, '#8F8A90'],
  ['122:長崎空港', '29', 699, '#266396'], ['106:青森空港', '22', 702, '#20262E'], ['118:高松空港', '16', 706, '#96633C'], ['123:熊本空港', '14', 711, '#5F8A1D'],
  ['124:大分空港', '11', 715, '#32383E'], ['125:宮崎空港', '7', 718, '#4D66A0'], ['117:米子空港', '5', 721, '#847235'], ['105:函館空港', '3', 724, '#6A4052'],
  ['127:佐賀空港', '2', 726, '#22306A'], ['113:富山空港', '1', 728, '#77757A']];

// straight flows of the smaller ports
const bands = [[640, '#FF8080'], [651, '#FFA058'], [652, '#12239E'], [653, '#FF8080'], [660, '#197278'], [664, '#12239E'], [666, '#D9B300'], [670, '#E044A7'],
  [675, '#3B3FA0'], [678, '#D9B300'], [680, '#744EC2'], [681, '#FFA058'], [682, '#12239E'], [690, '#0E4B3A'], [691, '#197278'], [702, '#605E6C'], [705, '#3A4048'],
  [708, '#FF8080'], [710, '#12239E'], [723, '#FFA058'], [732, '#744EC2'], [733]];
const taper = (x0, a, b, x1, c, d, col) => {
  const m = (x0 + x1) / 2;
  return `<path d="M${x0} ${a}C${m} ${a} ${m} ${c} ${x1} ${c}V${d}C${m} ${d} ${m} ${b} ${x0} ${b}z" fill="${col}"/>`;
};
for (let i = 0; i < bands.length - 1; i++) {
  const [y, c] = bands[i];
  out.push(`<rect x="537" y="${y}" width="366" height="${bands[i + 1][0] - y}" fill="${c}"/>`);
}
out.push(taper(537, 640, 650, 903, 642, 650, '#FF8080'));

const rings = [];
big.forEach((g, gi) => {
  out.push(taper(537, g.s[0], g.s[1], 903, g.t[0], g.t[0] + g.th, g.m));
  const from = g.t[0] + g.th, n = Math.round((g.t[1] - from) / 1.5), step = (g.t[1] - from) / n;
  for (let i = 0; i < n; i++) {
    const y = from + step * (i + .5), sy = g.y + (i / n - .5) * 2.4;
    const c = mix[(i + gi * 7 + (i * i * gi) % 5) % mix.length];
    out.push(`<path class="link" d="M537 ${sy}C720 ${sy} 720 ${y} 903 ${y}" stroke="${c}" stroke-width="${step + .1}"/>`);
    rings.push([y, c]);
  }
});
for (let y = 645; y < 745; y += 3) rings.push([y, mix[(y * 5) % mix.length]]);

// flows leaving the root
small.slice().reverse().forEach(([, , y, c], i) =>
  out.push(`<path class="link" d="M153 ${492 - i * .1}C335 ${492 - i * .1} 335 ${y} 518 ${y}" stroke="${c}"/>`));
big.slice().reverse().forEach((g, i) => {
  const s = 492 - i * .7;
  out.push(`<path class="link" d="M153 ${s}C335 ${s} 335 ${g.y} 518 ${g.y}" stroke="${g.c}" stroke-width="${g.w}"/>`);
});

// nodes
out.push(`<circle cx="143" cy="489" r="10" fill="#fff" stroke="${pale}"/>`);
small.slice().reverse().forEach(([, , y, c]) => out.push(`<circle cx="528" cy="${y}" r="10" fill="${c}" stroke="${pale}"/>`));
big.forEach(g => out.push(`<circle cx="528" cy="${g.y}" r="10" fill="${g.c}"/>${wedge(g.y, g.f)}<circle cx="528" cy="${g.y}" r="10" fill="none" stroke="${pale}"/>`));
rings.reverse().forEach(([y, c], i) => {
  if (i < 20 || i % 2) out.push(`<circle cx="912" cy="${y}" r="10" fill="${pale}" stroke="${c}" stroke-opacity="${y > 690 ? .35 : .75}"/>`);
});
out.push(`<circle cx="912" cy="212" r="10" fill="${pale}"/><path d="M912 211l-10-3v6z" fill="#12239E"/>`);

// labels
const fmt = v => v >= 40000 ? (v / 1e6).toFixed(2) + ' M' : v >= 1000 ? (v / 1000).toPrecision(3) + ' k' : String(Math.round(v));
out.push('<text x="110" y="493">All</text>');
label(191, 489, '3.65 M', .5);
big.forEach(g => { label(507, g.y, g.n, .5); label(576, g.y, g.v, .5); });
small.forEach(([n, v, y]) => { label(507, y, n, .5); label(576, y, v, .6); });
big.forEach((g, gi) => {
  const h = g.t[1] - g.t[0], n = Math.round(h / 1.57);
  for (let i = 0; i < n; i++) {
    const y = g.t[0] + 4 + i * h / n;
    const key = Object.keys(g.k).find(q => Math.abs(g.k[q] - y) <= h / n / 2);
    label(891, y, key ? wide[key] : prefs[i ? (i * (gi % 2 ? 3 : 1)) % prefs.length : 0], .45);
    if (i) label(960, y + 1, fmt(g.r * 220 * Math.exp(-i * .13)), .4);
  }
});
for (let y = 647, i = 0; y < 729; y += 2, i++) {
  label(891, y, [651, 681, 705, 721].includes(y) ? wide[14] : prefs[(i * 5) % prefs.length], .45);
  if (i) label(960, y + 1, i === 5 ? '1.62 k' : String(Math.max(1, Math.round(900 * Math.exp(-i * .14)))), .4);
}
// largest value of each block stays readable above its neighbours
big.forEach(g => label(960, g.t[0] + (g.r === 890 ? 4 : 6), (g.r / 1000).toFixed(2) + ' M', .2));
label(960, 647, '0.04 M', .2);
document.getElementById('flow').innerHTML = out.join('');
```
